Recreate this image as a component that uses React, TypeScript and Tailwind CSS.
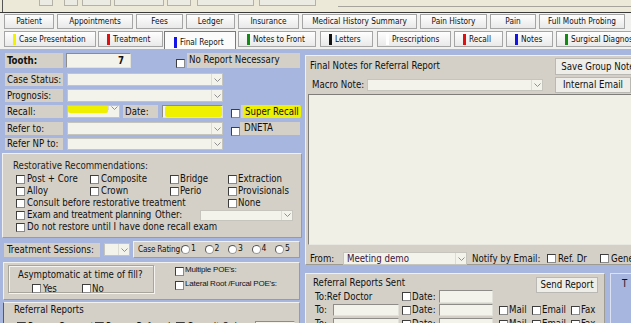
import React from "react";

type Kids = { className?: string; children?: React.ReactNode };

const Chevron = () => (
  <svg width="7" height="4" viewBox="0 0 7 4">
    <polyline points="0.5,0.5 3.5,3.5 6.5,0.5" fill="none" stroke="#8f8f8f" strokeWidth="1" />
  </svg>
);

const Chk = ({ className = "" }: { className?: string }) => (
  <span className={`inline-block size-[9px] shrink-0 border border-[#3d3d3d] border-b-[#8a8a8a] border-r-[#8a8a8a] bg-white ${className}`} />
);

const Radio = () => (
  <span className="inline-block size-[9px] shrink-0 rounded-full border border-[#555] border-b-[#999] border-r-[#999] bg-white" />
);

const Select = ({ className = "", children }: Kids) => (
  <div className={`flex shrink-0 border border-[#c6c5bd] bg-[#f3f2eb] ${className}`}>
    <div className="flex min-w-0 flex-1 items-center overflow-hidden">{children}</div>
    <span className="flex w-[11px] shrink-0 items-center justify-center border-l border-[#dddcd4]">
      <Chevron />
    </span>
  </div>
);

const Input = ({ className = "", children }: Kids) => (
  <div className={`flex shrink-0 items-center border border-[#8e8c86] border-b-[#e2e1da] border-r-[#e2e1da] bg-[#f3f2eb] ${className}`}>
    {children}
  </div>
);

const Label = ({ className = "", children }: Kids) => (
  <div className={`flex shrink-0 items-center whitespace-nowrap bg-[#d4d0c8] pl-[2px] ${className}`}>{children}</div>
);

const Panel = ({ className = "", children }: Kids) => (
  <div className={`shrink-0 border border-[#f2f1ec] border-b-[#9e9b93] border-r-[#9e9b93] bg-[#d4d0c8] ${className}`}>
    {children}
  </div>
);

const Btn = ({ className = "", children }: Kids) => (
  <div className={`flex shrink-0 items-center justify-center whitespace-nowrap border border-[#b9b8b2] bg-[#eeede7] ${className}`}>
    {children}
  </div>
);

const topBtns = [
  "ml-[36px] w-[14px]",
  "ml-[11px] w-[14px]",
  "ml-[4px] w-[29px]",
  "ml-[3px] w-[50px]",
  "ml-[3px] w-[24px]",
  "ml-[6px] w-[57px]",
  "ml-[5px] w-[57px]",
];

const tabsTop = [
  { label: "Patient", cls: "ml-[4px] w-[50px]" },
  { label: "Appointments", cls: "ml-[3px] w-[76px]" },
  { label: "Fees", cls: "ml-[3px] w-[47px]" },
  { label: "Ledger", cls: "ml-[3px] w-[49px]" },
  { label: "Insurance", cls: "ml-[3px] w-[61px]" },
  { label: "Medical History Summary", cls: "ml-[3px] w-[115px]" },
  { label: "Pain History", cls: "ml-[3px] w-[67px]" },
  { label: "Pain", cls: "ml-[3px] w-[46px]" },
  { label: "Full Mouth Probing", cls: "ml-[3px] w-[86px]" },
];

const tabsBottom = [
  { label: "Case Presentation", cls: "ml-[4px] w-[92px]", mark: "bg-[#f2f200]" },
  { label: "Treatment", cls: "ml-[2px] w-[65px]", mark: "bg-[#e01010]" },
  { label: "Final Report", cls: "ml-[1px] w-[72px]", mark: "bg-[#1414e6]", active: true },
  { label: "Notes to Front", cls: "ml-[2px] w-[78px]", mark: "bg-[#148a14]" },
  { label: "Letters", cls: "ml-[4px] w-[53px]", mark: "bg-[#111]" },
  { label: "Prescriptions", cls: "ml-[4px] w-[74px]", mark: "bg-white" },
  { label: "Recall", cls: "ml-[3px] w-[49px]", mark: "bg-[#e01010]" },
  { label: "Notes", cls: "ml-[3px] w-[47px]", mark: "bg-[#1414e6]" },
  { label: "Surgical Diagnosis", cls: "ml-[3px] w-[92px]", mark: "bg-[#148a14]" },
];

const restorative = [
  ["Post + Core", "Composite", "Bridge", "Extraction"],
  ["Alloy", "Crown", "Perio", "Provisionals"],
];

function LeftColumn() {
  return (
    <div className="flex w-[302px] shrink-0 flex-col">
      {/* Tooth */}
      <div className="mt-[4px] flex h-[15px] shrink-0">
        <Label className="ml-[5px] w-[58px] font-bold">Tooth:</Label>
        <Input className="ml-[3px] w-[65px] justify-end pr-[6px] font-bold">7</Input>
        <Chk className="ml-[45px] mt-[6px]" />
        <Label className="ml-[2px] w-[113px] items-start pt-[2px]">No Report Necessary</Label>
      </div>
      {/* Case status / Prognosis */}
      <div className="mt-[5px] flex h-[13px] shrink-0">
        <Label className="ml-[5px] w-[58px]">Case Status:</Label>
        <Select className="ml-[4px] w-[156px]" />
      </div>
      <div className="mt-[3px] flex h-[13px] shrink-0">
        <Label className="ml-[5px] w-[58px]">Prognosis:</Label>
        <Select className="ml-[4px] w-[156px]" />
      </div>
      {/* Recall */}
      <div className="mt-[3px] flex h-[13px] shrink-0">
        <Label className="ml-[5px] w-[58px]">Recall:</Label>
        <Select className="ml-[4px] w-[53px] items-start">
          <div className="-mt-[1px] h-[8px] w-full rounded-[2px] bg-[#eef000]" />
        </Select>
        <Label className="ml-[3px] w-[35px]">Date:</Label>
        <Input className="ml-[4px] w-[61px] items-stretch">
          <div className="ml-[2px] w-full rounded-[2px] bg-[#eef000]" />
        </Input>
        <Chk className="ml-[8px] mt-[4px]" />
        <Label className="ml-[1px] w-[59px] items-end">
          <span className="rounded-[2px] bg-[#eef000] px-[2px] pb-[1px] pt-[2px]">Super Recall</span>
        </Label>
      </div>
      {/* Refer */}
      <div className="mt-[4px] flex h-[13px] shrink-0">
        <Label className="ml-[5px] w-[58px]">Refer to:</Label>
        <Select className="ml-[4px] w-[156px]" />
        <Chk className="ml-[8px] mt-[5px]" />
        <Label className="ml-[0px] w-[60px] items-start pl-[4px] pt-[1px]">DNETA</Label>
      </div>
      <div className="mt-[3px] flex h-[12px] shrink-0">
        <Label className="ml-[5px] w-[58px]">Refer NP to:</Label>
        <Select className="ml-[4px] w-[156px]" />
      </div>

      {/* Restorative recommendations */}
      <Panel className="ml-[2px] mt-[3px] h-[85px] w-[300px] whitespace-nowrap pl-[13px] pt-[5px]">
        <div className="-ml-[3px] flex h-[14px] items-center text-[#222]">Restorative Recommendations:</div>
        {restorative.map((row, i) => (
          <div key={i} className="flex h-[12px] items-center">
            <div className="flex w-[74px] items-center gap-[2px]"><Chk />{row[0]}</div>
            <div className="flex w-[80px] items-center gap-[2px]"><Chk />{row[1]}</div>
            <div className="flex w-[58px] items-center gap-[1px]"><Chk />{row[2]}</div>
            <div className="flex items-center gap-[1px]"><Chk />{row[3]}</div>
          </div>
        ))}
        <div className="flex h-[12px] items-center">
          <div className="flex w-[212px] items-center gap-[2px]"><Chk />Consult before restorative treatment</div>
          <div className="flex items-center gap-[1px]"><Chk />None</div>
        </div>
        <div className="flex h-[12px] items-center">
          <div className="flex w-[139px] items-center gap-[2px] tracking-[-0.2px]"><Chk />Exam and treatment planning</div>
          <div className="w-[45px]">Other:</div>
          <Select className="h-[11px] w-[93px]" />
        </div>
        <div className="flex h-[12px] items-center gap-[2px]">
          <Chk />Do not restore until I have done recall exam
        </div>
      </Panel>

      {/* Treatment sessions + case rating */}
      <div className="mt-[3px] flex h-[17px] shrink-0 items-center">
        <Label className="ml-[4px] h-[14px] w-[96px] pl-[3px]">Treatment Sessions:</Label>
        <Select className="ml-[4px] h-[13px] w-[26px]" />
        <Panel className="ml-[3px] flex h-[17px] w-[167px] items-center whitespace-nowrap pl-[4px]">
          <span className="w-[43px] shrink-0 text-[8.2px] tracking-[-0.2px]">Case Rating</span>
          {[1, 2, 3, 4, 5].map((n) => (
            <span key={n} className="flex w-[23.5px] shrink-0 items-center">
              <Radio />
              <span className="-mt-[3px] ml-[1px] text-[8.5px]">{n}</span>
            </span>
          ))}
        </Panel>
      </div>

      {/* Asymptomatic */}
      <Panel className="ml-[3px] mt-[4px] flex h-[38px] w-[297px]">
        <div className="ml-[4px] mt-[2px] h-[28px] w-[146px] whitespace-nowrap border border-[#a8a59d] shadow-[inset_1px_1px_0_#f4f3ef,1px_1px_0_#f4f3ef]">
          <div className="mt-[4px] pl-[9px]">Asymptomatic at time of fill?</div>
          <div className="mt-[4px] flex items-center">
            <Chk className="ml-[23px]" />
            <span className="ml-[2px] w-[39px]">Yes</span>
            <Chk />
            <span className="ml-[1px]">No</span>
          </div>
        </div>
        <div className="ml-[21px] flex flex-col whitespace-nowrap font-[family-name:'Liberation_Sans',sans-serif] text-[8px] tracking-[-0.2px]">
          <div className="mt-[4px] flex items-start"><Chk /><span className="-mt-[1px] ml-[1px]">Multiple POE's:</span></div>
          <div className="mt-[4px] flex items-start"><Chk className="mt-[1px]" /><span className="ml-[1px]">Lateral Root /Furcal POE's:</span></div>
        </div>
      </Panel>

      {/* Referral reports */}
      <Panel className="ml-[3px] mt-[2px] h-[40px] w-[297px] border-l-[#5a5a5a]">
        <div className="pl-[10px] pt-[2px]">Referral Reports</div>
        <div className="mt-[6px] flex items-center whitespace-nowrap">
          <Chk className="ml-[13px]" /><span className="ml-[2px] w-[67px]">Pre-op Consent</span>
          <Chk /><span className="ml-[2px] w-[70px]">Pre-op Referral</span>
          <Chk /><span className="ml-[2px] w-[68px]">Consult Only</span>
          <Input className="h-[12px] w-[40px]" />
        </div>
      </Panel>
    </div>
  );
}

function RightColumn() {
  return (
    <div className="ml-[3px] flex min-w-0 flex-1 flex-col overflow-hidden">
      <Panel className="mt-[6px] flex h-[210px] w-[340px] flex-col">
        <div className="flex h-[38px] shrink-0">
          <div className="flex w-[249px] shrink-0 flex-col">
            <div className="mt-[5px] h-[10px] pl-[4px]">Final Notes for Referral Report</div>
            <div className="mt-[8px] flex h-[12px] items-center">
              <span className="w-[61px] shrink-0 pl-[6px]">Macro Note:</span>
              <Select className="h-[12px] w-[176px]" />
            </div>
          </div>
          <div className="flex flex-col gap-[2px] pt-[2px]">
            <Btn className="h-[17px] w-[86px]">Save Group Note</Btn>
            <Btn className="h-[16px] w-[76px]">Internal Email</Btn>
          </div>
        </div>
        <div className="ml-[2px] h-[151px] shrink-0 border border-[#7f7d78] border-b-[#e8e7e0] border-r-[#e8e7e0] bg-[#f1f0e7]" />
        <div className="mt-[7px] flex h-[13px] shrink-0 items-center whitespace-nowrap">
          <span className="w-[37px] shrink-0 pl-[4px]">From:</span>
          <Select className="h-[13px] w-[124px]">
            <span className="pl-[3px] text-[#3b1539]">Meeting demo</span>
          </Select>
          <span className="ml-[5px] w-[75px] shrink-0">Notify by Email:</span>
          <Chk />
          <span className="ml-[2px] w-[42px] shrink-0">Ref. Dr</span>
          <Chk />
          <span className="ml-[2px]">General</span>
        </div>
      </Panel>

      <div className="mt-[8px] flex flex-1">
        <Panel className="w-[300px] whitespace-nowrap pt-[2px]">
          <div className="flex h-[14px] items-start">
            <span className="pl-[7px] pt-[2px]">Referral Reports Sent</span>
            <Btn className="ml-auto mr-[6px] mt-[1px] h-[16px] w-[62px]">Send Report</Btn>
          </div>
          <div className="flex h-[13px] items-center pl-[9px]">
            <span className="w-[87px] shrink-0">To:Ref Doctor</span>
            <Chk />
            <span className="ml-[1px] w-[27px] shrink-0">Date:</span>
            <Input className="h-[13px] w-[54px]" />
          </div>
          {[0, 1].map((r) => (
            <div key={r} className={`flex h-[12px] items-center pl-[9px] ${r === 0 ? "mt-[1px]" : "mt-[2px]"}`}>
              <span className="w-[18px] shrink-0">To:</span>
              <Input className="h-[12px] w-[66px]" />
              <Chk className="ml-[3px]" />
              <span className="ml-[1px] w-[27px] shrink-0">Date:</span>
              <Input className="h-[12px] w-[54px]" />
              <Chk className="ml-[6px]" />
              <span className="ml-[1px] w-[23px] shrink-0">Mail</span>
              <Chk />
              <span className="ml-[1px] w-[29px] shrink-0">Email</span>
              <Chk />
              <span className="ml-[1px]">Fax</span>
            </div>
          ))}
        </Panel>
        <div className="ml-[5px] flex-1 border-l border-t border-[#dde2f2] pl-[11px] pt-[5px]">T</div>
      </div>
    </div>
  );
}

export default function App() {
  return (
    <div className="h-[323px] w-[631px] overflow-hidden bg-[#ece9d8] font-[family-name:'DejaVu_Sans_Condensed','Liberation_Sans',sans-serif] text-[9.6px] leading-none text-[#111]">
      {/* toolbar remnants */}
      <div className="ml-[2px] flex h-[12px] items-start border-l border-[#555]">
        {topBtns.map((c, i) => (
          <div key={i} className={`h-[6px] border-x border-b border-[#b4b2a8] bg-[#ecebe3] ${c}`} />
        ))}
        <div className="ml-[22px] h-[7px] flex-1 border-b border-[#a6a49c]" />
      </div>

      {/* tabs */}
      <div className="border-t border-[#3a3a3a] bg-[#f1f1ef] pb-[2px] pt-[1px] text-[8.2px]">
        <div className="flex h-[15px]">
          {tabsTop.map((t) => (
            <div key={t.label} className={`flex shrink-0 items-center justify-center whitespace-nowrap border border-[#a5a5a5] bg-linear-to-b from-[#fefefe] to-[#e9e9e9] ${t.cls}`}>
              {t.label}
            </div>
          ))}
        </div>
        <div className="mt-[2px] flex h-[16px]">
          {tabsBottom.map((t) =>
            t.active ? (
              <div key={t.label} className={`-mb-[2px] flex shrink-0 items-center whitespace-nowrap border border-[#7a7a7a] border-b-0 bg-[#fbfbfb] pt-[3px] ${t.cls}`}>
                <span className={`ml-[9px] h-[11px] w-[3px] ${t.mark}`} />
                <span className="ml-[3px]">{t.label}</span>
              </div>
            ) : (
              <div key={t.label} className={`flex shrink-0 items-center whitespace-nowrap border border-[#a5a5a5] bg-linear-to-b from-[#fefefe] to-[#e9e9e9] ${t.cls}`}>
                <span className={`ml-[8px] h-[11px] w-[3px] shrink-0 ${t.mark}`} />
                <span className="ml-[3px]">{t.label}</span>
              </div>
            )
          )}
        </div>
      </div>

      <main className="flex h-[274px] bg-[#a7b6de]">
        <LeftColumn />
        <RightColumn />
      </main>
    </div>
  );
}
